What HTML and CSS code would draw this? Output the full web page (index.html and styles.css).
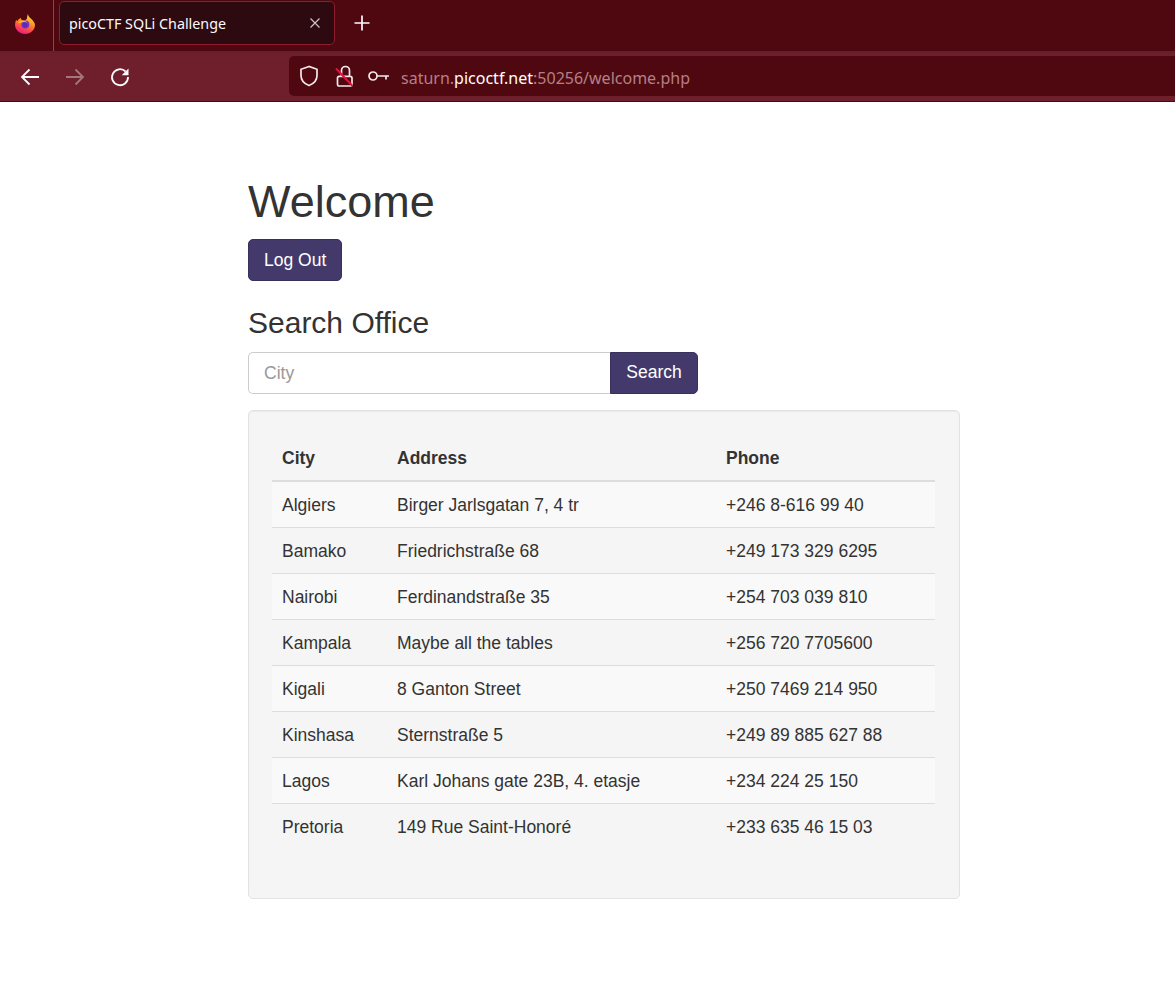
FILE: index.html
```html
<!DOCTYPE html>
<html lang="en">
<head>
<meta charset="utf-8">
<title>picoCTF SQLi Challenge</title>
<link rel="stylesheet" href="styles.css">
</head>
<body>
<header class="browser">
  <div class="tabbar">
    <div class="app-slot">
      <svg class="fx" viewBox="0 0 20 20" width="20" height="20" aria-hidden="true">
        <defs>
          <linearGradient id="fxg" x1="0.75" y1="0" x2="0.35" y2="1">
            <stop offset="0" stop-color="#ffe04a"/>
            <stop offset="0.4" stop-color="#ff9a1f"/>
            <stop offset="0.72" stop-color="#ff4a4a"/>
            <stop offset="1" stop-color="#e8178a"/>
          </linearGradient>
        </defs>
        <path fill="url(#fxg)" d="M13 0c0 2 1.300 3 2.800 4.500C18 6.700 20 8.500 20 11c0 4.800-4.500 9-10 9S0 15.800 0 10.800c0-1.800.5-3.500 1.200-5 .3.700.6 1.100 1.100 1.500C3 5.700 4.400 4.400 6 4c-.2.800.1 1.500.8 2 1.700.5 4 .2 5-1 .5-1.500.3-3.200 1.200-5z"/>
        <circle cx="10.300" cy="10.600" r="4" fill="#6d37d0"/>
        <circle cx="10" cy="11" r="2.400" fill="#5b2ab8"/>
        <path fill="#ffb52e" d="M2.800 8.600c1.500-1.400 3.800-2.100 6.300-1.700 1.300.2 2.600.8 3.300 1.800-1.700-.7-3.700-.8-5.400-.2-1.500.5-2.900.8-4.200.1z"/>
      </svg>
    </div>
    <div class="tab">
      <span class="tab-title">picoCTF SQLi Challenge</span>
      <svg class="tab-close" viewBox="0 0 10 10" width="10" height="10" aria-hidden="true"><path d="M.5.500l9 9M9.500.500l-9 9"/></svg>
    </div>
    <svg class="new-tab" viewBox="0 0 16 16" width="16" height="16" aria-hidden="true"><path d="M8 .5v15M.5 8h15"/></svg>
  </div>
  <div class="toolbar">
    <nav class="nav-buttons">
      <svg class="nav-icon" viewBox="0 0 20 20" width="20" height="20" aria-hidden="true"><path d="M19 10H2M9.500 2.500 2 10l7.500 7.500"/></svg>
      <svg class="nav-icon is-off" viewBox="0 0 20 20" width="20" height="20" aria-hidden="true"><path d="M1 10h17M10.500 2.500 18 10l-7.500 7.500"/></svg>
      <svg class="nav-icon" viewBox="0 0 20 20" width="20" height="20" aria-hidden="true"><path d="M15.600 4.500A8 8 0 1 0 18 10"/><path class="solid" d="M18.500 1.500v6.800h-6.800z"/></svg>
    </nav>
    <div class="urlbar">
      <svg class="url-icon" viewBox="0 0 20 22" width="20" height="22" aria-hidden="true"><path d="M10 1.500 2 4.300v6.200c0 4.600 3.200 8.200 8 10 4.800-1.800 8-5.400 8-10V4.300z"/></svg>
      <svg class="url-icon lock" viewBox="0 0 20 22" width="20" height="22" aria-hidden="true"><path d="M3.500 13c0-1 .7-1.700 1.700-1.700h11.100c1 0 1.700.7 1.700 1.700v6.300c0 1-.7 1.700-1.700 1.700H5.200c-1 0-1.700-.7-1.700-1.700zM7.500 11V5.500a4 4 0 0 1 8 0V11"/><path class="slash" d="M2 3.500 18.500 21"/></svg>
      <svg class="url-icon key" viewBox="0 0 22 12" width="22" height="12" aria-hidden="true"><circle cx="5" cy="6" r="4"/><path d="M9 6h12M18 6v3.500"/></svg>
      <div class="url"><span class="dim">saturn.</span><span class="host">picoctf.net</span><span class="dim">:50256/welcome.php</span></div>
    </div>
  </div>
</header>
<main class="page">
  <h1 class="title">Welcome</h1>
  <button class="btn" type="button">Log Out</button>
  <h3 class="subtitle">Search Office</h3>
  <form class="search">
    <input class="search-input" type="text" placeholder="City">
    <button class="btn btn-join" type="button">Search</button>
  </form>
  <section class="well">
    <table class="offices">
      <colgroup><col class="col-city"><col class="col-address"><col class="col-phone"></colgroup>
      <thead><tr><th>City</th><th>Address</th><th>Phone</th></tr></thead>
      <tbody>
        <tr><td>Algiers</td><td>Birger Jarlsgatan 7, 4 tr</td><td>+246 8-616 99 40</td></tr>
        <tr><td>Bamako</td><td>Friedrichstraße 68</td><td>+249 173 329 6295</td></tr>
        <tr><td>Nairobi</td><td>Ferdinandstraße 35</td><td>+254 703 039 810</td></tr>
        <tr><td>Kampala</td><td>Maybe all the tables</td><td>+256 720 7705600</td></tr>
        <tr><td>Kigali</td><td>8 Ganton Street</td><td>+250 7469 214 950</td></tr>
        <tr><td>Kinshasa</td><td>Sternstraße 5</td><td>+249 89 885 627 88</td></tr>
        <tr><td>Lagos</td><td>Karl Johans gate 23B, 4. etasje</td><td>+234 224 25 150</td></tr>
        <tr><td>Pretoria</td><td>149 Rue Saint-Honoré</td><td>+233 635 46 15 03</td></tr>
      </tbody>
    </table>
  </section>
</main>
</body>
</html>
```
FILE: styles.css
```css
* { box-sizing: border-box; }
html, body { margin: 0; padding: 0; background: #fff; }
body { font-family: "Liberation Sans", Arial, sans-serif; font-size: 17.5px; line-height: 25px; color: #333; }

.browser { height: 102px; display: flex; flex-direction: column; }
.tabbar { height: 51px; background: #4f0810; display: flex; align-items: center; }
.app-slot { width: 54px; height: 51px; border-right: 1px solid #7f4a50; display: flex; align-items: center; padding: 0 0 4px 15px; }
.fx { display: block; }
.tab { width: 276px; height: 44px; margin: -5px 0 0 5px; background: #2d0a0f; border: 1px solid #8f1c2c; border-radius: 5px; display: flex; align-items: center; justify-content: space-between; padding: 0 14px 0 9px; }
.tab-title { font-family: "Noto Sans", sans-serif; font-size: 14.300px; line-height: 20px; margin-top: 2px; color: #fbfbfe; white-space: nowrap; }
.tab-close { fill: none; stroke: #cfc3c5; stroke-width: 1.200; }
.new-tab { margin: -5px 0 0 19px; fill: none; stroke: #fbfbfe; stroke-width: 1.700; }

.toolbar { height: 51px; background: #6e1f2b; border-top: 2px solid #652029; border-bottom: 1px solid #4f0810; display: flex; align-items: center; }
.nav-buttons { width: 289px; display: flex; gap: 25px; padding: 0 0 1px 20px; }
.nav-icon { fill: none; stroke: #fbfbfe; stroke-width: 1.800; }
.nav-icon.is-off { stroke: #a4767d; }
.nav-icon .solid { fill: #fbfbfe; stroke: none; }
.urlbar { flex: 1; height: 40px; margin-top: -3px; background: #4f0810; border-radius: 5px 0 0 5px; display: flex; align-items: center; padding-left: 10px; }
.url-icon { fill: none; stroke: #f3e9ea; stroke-width: 1.700; flex: none; }
.lock { margin-left: 15px; }
.lock .slash { stroke: #e0123f; stroke-width: 2; }
.key { margin-left: 14px; }
.url { margin: 6px 0 0 11px; font-family: "Noto Sans", sans-serif; font-size: 16px; white-space: nowrap; }
.dim { color: #b38087; }
.host { color: #fff; }

.page { width: 712px; margin-left: 248px; padding-top: 75px; }
.title { margin: 0 0 12.500px; font-size: 45px; line-height: 49.500px; font-weight: 500; }
.subtitle { margin: 25px 0 12.500px; font-size: 30px; line-height: 33px; font-weight: 500; }
.btn { display: block; height: 42px; padding: 0 15px; font: inherit; color: #fff; background: #433a6b; border: 1px solid #38315c; border-radius: 5px; }
.search { display: flex; width: 450px; height: 42px; margin-bottom: 16px; }
.search-input { flex: 1; min-width: 0; padding: 1px 15px 0; font: inherit; color: #555; background: #fff; border: 1px solid #ccc; border-right: 0; border-radius: 5px 0 0 5px; }
.search-input::placeholder { color: #999; opacity: 1; }
.btn-join { width: 88px; padding: 0; text-align: center; border-radius: 0 5px 5px 0; }

.well { background: #f5f5f5; border: 1px solid #e3e3e3; border-radius: 5px; padding: 23px 24px 49px 23px; box-shadow: inset 0 1px 1px rgba(0,0,0,.05); }
.offices { width: 100%; border-collapse: collapse; table-layout: fixed; }
.col-city { width: 115px; }
.col-address { width: 329px; }
.offices th, .offices td { text-align: left; }
.offices th { padding: 12px 10px 9px; font-weight: 700; border-bottom: 2px solid #ddd; }
.offices td { padding: 11px 10px 9px; border-top: 1px solid #ddd; }
.offices thead + tbody tr:first-child td { border-top: 0; }
.offices tbody tr:nth-child(odd) { background: #f9f9f9; }
```
